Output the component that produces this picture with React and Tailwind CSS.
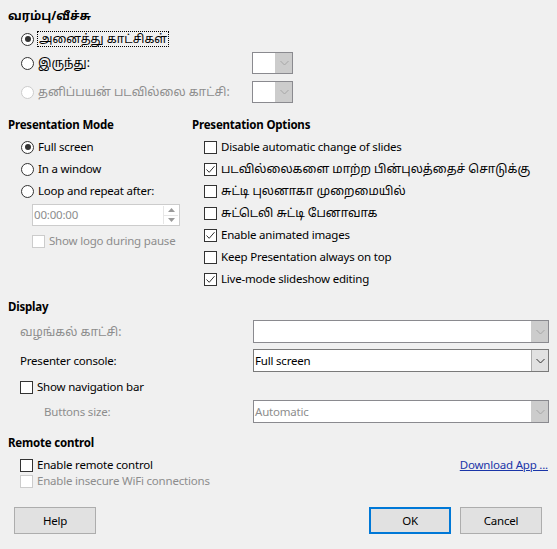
import { useState } from "react";

const font = { fontFamily: '"Noto Sans", "Noto Sans Tamil", "Lohit Tamil", sans-serif' };

// Tamil text keeps its own size; the Latin text is squeezed to Segoe-like widths
const Ta = ({ children, className = "" }) => (
  <span className={`text-[12px] tracking-normal ${className}`}>{children}</span>
);

const Radio = ({ checked, disabled }) => (
  <span
    className={`w-[13px] h-[13px] rounded-full border bg-white flex items-center justify-center shrink-0 ${
      disabled ? "border-[#cccccc]" : "border-[#333333]"
    }`}
  >
    {checked && <span className="w-[6px] h-[6px] rounded-full bg-[#333333]" />}
  </span>
);

const Check = ({ checked, disabled }) => (
  <span
    className={`w-[13px] h-[13px] border bg-white flex items-center justify-center shrink-0 ${
      disabled ? "border-[#cccccc]" : "border-[#333333]"
    }`}
  >
    {checked && (
      <svg width="11" height="11" viewBox="0 0 11 11">
        <polyline points="1.5,5.5 4.2,8.3 9.5,2.2" fill="none" stroke="#333" strokeWidth="1" />
      </svg>
    )}
  </span>
);

const Chevron = ({ color }) => (
  <svg width="9" height="6" viewBox="0 0 9 6">
    <polyline points="0.5,1 4.5,5 8.5,1" fill="none" stroke={color} strokeWidth="1" />
  </svg>
);

const Combo = ({ className, value, disabled }) => (
  <div className={`flex border bg-white ${disabled ? "border-[#8a8a8f]" : "border-[#7a7a7a]"} ${className}`}>
    <div className={`flex-1 flex items-center pl-[1px] ${disabled ? "text-[#8d8d8d]" : "text-black"}`}>{value}</div>
    <div
      className={`w-[17px] flex items-center justify-center border-l ${
        disabled ? "bg-[#cccccc] border-[#cccccc]" : "bg-[#e1e1e1] border-[#adadad]"
      }`}
    >
      <Chevron color={disabled ? "#a6a6a6" : "#333333"} />
    </div>
  </div>
);

const Heading = ({ children, className = "" }) => (
  <div className={`h-4 leading-4 font-bold text-black ${className}`}>{children}</div>
);

const Button = ({ children, primary, className = "" }) => (
  <button
    className={`w-[82px] h-[27px] bg-[#e1e1e1] text-black ${
      primary ? "border-2 border-[#0078d7]" : "border border-[#adadad]"
    } ${className}`}
  >
    {children}
  </button>
);

export default function App() {
  const [opts] = useState([
    { label: "Disable automatic change of slides", checked: false },
    { label: "படவில்லைகளை மாற்ற பின்புலத்தைச் சொடுக்கு", checked: true, ta: true },
    { label: "சுட்டி புலனாகா முறைமையில்", checked: false, ta: true },
    { label: "சுட்டெலி சுட்டி பேனாவாக", checked: false, ta: true },
    { label: "Enable animated images", checked: true },
    { label: "Keep Presentation always on top", checked: false },
    { label: "Live-mode slideshow editing", checked: true },
  ]);

  return (
    <div className="w-[557px] h-[549px] bg-[#f0f0f0] px-2 pt-2 text-[11.5px] tracking-[-0.2px] text-black" style={font}>
      {/* Range */}
      <Heading>
        <Ta>வரம்பு/வீச்சு</Ta>
      </Heading>
      <div className="mt-[6px] h-[18px] flex items-center pl-[13px] gap-[3px]">
        <Radio checked />
        <Ta className="border border-dotted border-black px-[1px] leading-[14px]">அனைத்து காட்சிகள்</Ta>
      </div>
      <div className="mt-[4px] h-[22px] flex items-center pl-[13px] gap-[4px]">
        <Radio />
        <Ta className="flex-1">இருந்து:</Ta>
        <Combo className="w-[41px] h-[22px] mr-[256px]" disabled />
      </div>
      <div className="mt-[7px] h-[22px] flex items-center pl-[13px] gap-[4px]">
        <Radio disabled />
        <Ta className="flex-1 text-[#8d8d8d]">தனிப்பயன் படவில்லை காட்சி:</Ta>
        <Combo className="w-[41px] h-[22px] mr-[256px]" disabled />
      </div>

      {/* Mode / Options */}
      <div className="mt-[14px] flex">
        <div className="w-[184px]">
          <Heading>Presentation Mode</Heading>
          <div className="mt-[3px] pl-[13px]">
            {["Full screen", "In a window", "Loop and repeat after:"].map((t, i) => (
              <div key={t} className="h-[22px] flex items-center gap-[4px]">
                <Radio checked={i === 0} />
                <span>{t}</span>
              </div>
            ))}
          </div>
          <div className="mt-[2px] ml-[24px] w-[148px] h-[22px] border border-[#cccccc] bg-white flex items-center">
            <span className="flex-1 pl-[1px] text-[#8d8d8d]">00:00:00</span>
            <div className="w-[15px] h-[18px] mr-[1px] flex flex-col border-l border-[#e6e6e6]">
              <div className="flex-1 flex items-center justify-center border-b border-[#e6e6e6]">
                <svg width="7" height="4" viewBox="0 0 7 4"><polygon points="0,4 3.5,0 7,4" fill="#9a9a9a" /></svg>
              </div>
              <div className="flex-1 flex items-center justify-center">
                <svg width="7" height="4" viewBox="0 0 7 4"><polygon points="0,0 3.5,4 7,0" fill="#9a9a9a" /></svg>
              </div>
            </div>
          </div>
          <div className="h-[22px] mt-[4px] ml-[24px] flex items-center gap-[4px] text-[#8d8d8d]">
            <Check disabled />
            <span>Show logo during pause</span>
          </div>
        </div>
        <div className="flex-1">
          <Heading>Presentation Options</Heading>
          <div className="mt-[3px] pl-[12px]">
            {opts.map((o) => (
              <div key={o.label} className="h-[22px] flex items-center gap-[4px]">
                <Check checked={o.checked} />
                {o.ta ? <Ta>{o.label}</Ta> : <span>{o.label}</span>}
              </div>
            ))}
          </div>
        </div>
      </div>

      {/* Display */}
      <Heading className="mt-[9px]">Display</Heading>
      <div className="mt-[5px] h-[23px] flex items-center pl-[12px]">
        <Ta className="w-[233px] text-[#8d8d8d]">வழங்கல் காட்சி:</Ta>
        <Combo className="w-[296px] h-[23px]" disabled />
      </div>
      <div className="mt-[6px] h-[23px] flex items-center pl-[12px]">
        <span className="w-[233px]">Presenter console:</span>
        <Combo className="w-[296px] h-[23px]" value="Full screen" />
      </div>
      <div className="mt-[4px] h-[22px] flex items-center pl-[12px] gap-[4px]">
        <Check />
        <span>Show navigation bar</span>
      </div>
      <div className="mt-[2px] h-[23px] flex items-center pl-[36px]">
        <span className="w-[209px] text-[#8d8d8d]">Buttons size:</span>
        <Combo className="w-[296px] h-[23px]" value="Automatic" disabled />
      </div>

      {/* Remote */}
      <Heading className="mt-[12px]">Remote control</Heading>
      <div className="mt-[6px] h-4 flex items-center pl-[12px] gap-[4px]">
        <Check />
        <span className="flex-1">Enable remote control</span>
        <a className="underline text-[#1a35a8] mr-[1px]" href="#">Download App ...</a>
      </div>
      <div className="h-4 flex items-center pl-[12px] gap-[4px] text-[#8d8d8d]">
        <Check disabled />
        <span>Enable insecure WiFi connections</span>
      </div>

      <div className="mt-[18px] flex pl-[6px] pr-[7px]">
        <Button>Help</Button>
        <div className="flex-1" />
        <Button primary>OK</Button>
        <Button className="ml-[9px]">Cancel</Button>
      </div>
    </div>
  );
}
